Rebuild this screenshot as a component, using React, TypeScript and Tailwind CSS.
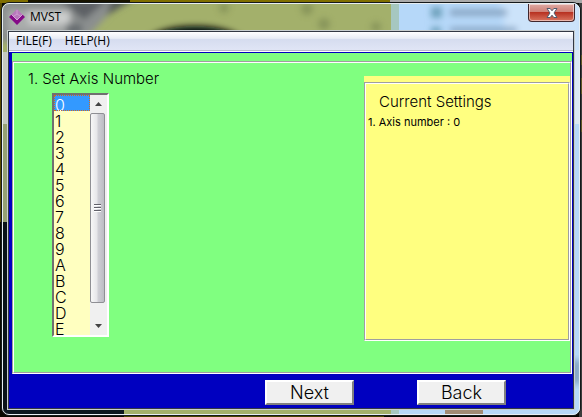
import React from "react";

const axisNumbers = ["0", "1", "2", "3", "4", "5", "6", "7", "8", "9", "A", "B", "C", "D", "E", "F"];

const Wallpaper = () => (
    <svg className="absolute inset-0 h-full w-full" viewBox="0 0 582 417" preserveAspectRatio="none" aria-hidden="true">
        <defs>
            <filter id="soft" x="-20%" y="-20%" width="140%" height="140%">
                <feGaussianBlur stdDeviation="3" />
            </filter>
            <clipPath id="glass">
                <rect x="2" y="3" width="578" height="412" rx="7" />
            </clipPath>
        </defs>
        <rect width="582" height="417" fill="#080800" />
        <path d="M0 0h390v3H0z" fill="#806f00" />
        <path d="M28 0h102v3H28z" fill="#171300" />
        <path d="M390 0h192v3H390z" fill="#aaa" />
        <path d="M0 3h2v219H0z" fill="#574a00" />
        <path d="M579 3h3v414h-3z" fill="#3c3c3c" />
        <path d="M579 55h3v10h-3zM579 78h3v16h-3zM579 120h3v12h-3z" fill="#5f5624" />
        <path d="M124 415h260v2H124z" fill="#4b4500" />
        <g clipPath="url(#glass)">
            <rect width="582" height="417" fill="#a3b06b" />
            <g filter="url(#soft)">
                <path d="M-10 -10h140l-25 28-22 24H-10z" fill="#8b8f8f" />
                <path d="M60 0h48L84 20z" fill="#5d6165" />
                <path d="M8 10l50 2 10 20H8z" fill="#a9acab" />
                <path d="M28 11h42v13H28z" fill="#cccecd" />
                <path d="M66 24h16v10H66z" fill="#666c70" />
                <ellipse cx="195" cy="44" rx="50" ry="18" fill="#05090c" />
                <path d="M112 -2h24l-30 18z" fill="#565c59" />
            </g>
            <g fill="#76834f" filter="url(#soft)" opacity=".6">
                <circle cx="224" cy="8" r="5" />
                <circle cx="307" cy="9" r="6" />
                <circle cx="324" cy="24" r="6" />
                <circle cx="376" cy="27" r="5" />
            </g>
            <path d="M396 0h186v417H396z" fill="#b6d8f9" />
            <path d="M391 0h8v417h-8z" fill="#a6c7c0" />
            <g filter="url(#soft)">
                <path d="M500 0h82v120h-60z" fill="#cce3fa" />
                <path d="M431 7h11v11h-11zM431 27h10v8h-10z" fill="#6fa3bd" />
                <path d="M450 9h57v7h-57zM450 27h67v6h-67z" fill="#8ba8c6" />
            </g>
            <path d="M2 52h6v72H2z" fill="#c4c8be" />
            <path d="M2 124h6v98H2z" fill="#96a173" />
            <path d="M2 222h6v193H2z" fill="#0a1218" />
            <path d="M2 409h122v6H2z" fill="#0b1720" />
            <path d="M573 50h7v74h-7z" fill="#dbe8f3" />
            <path d="M573 360h7v24h-7z" fill="#7895b5" filter="url(#soft)" />
            <path d="M445 409h38v5h-38z" fill="#a18b75" />
        </g>
    </svg>
);

const Logo = () => (
    <svg className="h-4 w-4" viewBox="0 0 16 16" aria-hidden="true">
        <path d="M8 0l5.500 5.500L8 11 2.500 5.500z" fill="#b878bc" />
        <path d="M8 1v4L3.500 8M8 5l4.500 3" fill="none" stroke="#d6a9d9" strokeWidth=".7" />
        <path d="M2.500 5.500L8 11l5.500-5.500L16 8l-8 8-8-8z" fill="#850b88" />
        <path d="M2.500 5.500L8 11l5.500-5.500" fill="none" stroke="#e5bbe8" strokeWidth=".8" />
    </svg>
);

const TitleBar = () => (
    <header className="flex h-[26px] items-start justify-between">
        <div className="flex items-center gap-[5px] pt-[3px] pl-0.5">
            <Logo />
            <h1 className="text-xs leading-5">MVST</h1>
        </div>
        <button
            type="button"
            aria-label="Close"
            className="flex h-[18px] w-[47px] items-center justify-center rounded-b border border-t-0 border-[#40272d] bg-[linear-gradient(#dfaaa4_0%,#cf8278_45%,#b83222_50%,#d97560_100%)] shadow-[inset_0_0_0_1px_#ffffff80]"
        >
            <svg className="h-3 w-3" viewBox="0 0 12 12" aria-hidden="true">
                <path
                    d="M1 1.5h3.2L6 3.8l1.8-2.3H11L8 6l3 4.5H7.8L6 8.2l-1.8 2.3H1L4 6z"
                    fill="#fff"
                    stroke="#525b6d"
                    strokeWidth="1"
                />
            </svg>
        </button>
    </header>
);

const MenuBar = () => (
    <nav className="flex h-[19px] items-center gap-[13px] border-b border-[#b5bacb] bg-[linear-gradient(#fff_0%,#e8ecf5_36%,#d5dcef_37%,#e0e5f5_100%)] px-[7px] text-xs">
        <button type="button">FILE(F)</button>
        <button type="button">HELP(H)</button>
    </nav>
);

const ScrollBar = () => (
    <div className="flex w-[17px] flex-col bg-[#f0f0f0]" aria-hidden="true">
        <svg className="h-[18px] w-full" viewBox="0 0 17 18">
            <path d="M5 11l3.500-4 3.500 4z" fill="#444" />
        </svg>
        <div className="mr-0.5 flex flex-1 items-center justify-center rounded-xs border border-[#8f8f94] bg-[linear-gradient(90deg,#f7f7f7_0%,#e6e6e9_45%,#cfcfd5_55%,#bcbcc4_100%)]">
            <svg className="h-2 w-2" viewBox="0 0 8 8">
                <path d="M0 .5h7M0 3.500h7M0 6.500h7" stroke="#62626a" />
                <path d="M0 1.500h7M0 4.500h7M0 7.500h7" stroke="#fff" />
            </svg>
        </div>
        <svg className="h-8 w-full" viewBox="0 0 17 32">
            <path d="M5 21l3.500 4 3.500-4z" fill="#444" />
        </svg>
    </div>
);

const AxisList = () => (
    <div className="flex w-fit border-2 border-t-[#707070] border-r-white border-b-white border-l-[#707070] bg-[#ffffc0]">
        <select
            id="axis"
            size={15}
            defaultValue="0"
            className="h-60 w-9 overflow-hidden bg-[#ffffc0] p-0 text-base outline-none [scrollbar-width:none]"
        >
            {axisNumbers.map((n) => (
                <option
                    key={n}
                    value={n}
                    className="h-4 min-h-4 p-0 pl-px leading-[14px] font-light text-black checked:bg-[linear-gradient(#3399ff,#3399ff)] checked:outline-1 checked:-outline-offset-1 checked:outline-dotted checked:outline-[#d06a20] checked:[-webkit-text-fill-color:white]"
                >
                    {n}
                </option>
            ))}
        </select>
        <ScrollBar />
    </div>
);

const CurrentSettings = () => (
    <section className="w-[206px] bg-[#ffff80] pt-1.5">
        <div className="border border-t-[#9f9f9f] border-r-white border-b-white border-l-[#9f9f9f]">
            <div className="h-[257px] border border-t-white border-r-[#9f9f9f] border-b-[#9f9f9f] border-l-white pt-2">
                <h2 className="pl-[13px] text-[15px] leading-5 font-light">Current Settings</h2>
                <p className="pl-0.5 text-[11px] leading-5">1. Axis number : 0</p>
            </div>
        </div>
    </section>
);

const WizardButton = ({ children }: { children: React.ReactNode }) => (
    <button
        type="button"
        className="h-[25px] w-[89px] border-2 border-t-white border-r-[#808080] border-b-[#808080] border-l-white bg-[#f0f0f0] text-lg leading-5 font-light"
    >
        {children}
    </button>
);

const App = () => {
    return (
        <div className="relative min-h-screen px-px pt-0.5 pb-px font-['Open_Sans',sans-serif] text-black">
            <Wallpaper />
            <div className="relative rounded-lg border border-[#15191b]">
                <div className="rounded-[7px] border border-[#e6eef2] px-1">
                    <TitleBar />
                    <div className="border border-[#c8ced0]">
                        <div className="border border-[#333944] bg-[#0000c0]">
                            <MenuBar />
                            <main className="border-t border-t-white font-['Inter',sans-serif]">
                                <div className="mt-px mr-px ml-[3px] bg-[#80ff80] pt-2">
                                    <div className="border border-t-[#9f9f9f] border-r-white border-b-white border-l-[#9f9f9f]">
                                        <div className="flex h-[311px] justify-between border border-t-white border-r-[#9f9f9f] border-b-[#9f9f9f] border-l-white">
                                            <div className="pt-1 pl-3.5">
                                                <label htmlFor="axis" className="block text-[15px] leading-6 font-light">
                                                    1. Set Axis Number
                                                </label>
                                                <div className="pt-0.5 pl-6">
                                                    <AxisList />
                                                </div>
                                            </div>
                                            <div className="pt-[13px]">
                                                <CurrentSettings />
                                            </div>
                                        </div>
                                    </div>
                                </div>
                                <footer className="flex h-[34px] items-start justify-end gap-[63px] pt-1.5 pr-[67px]">
                                    <WizardButton>Next</WizardButton>
                                    <WizardButton>Back</WizardButton>
                                </footer>
                            </main>
                        </div>
                    </div>
                    <div className="h-1" />
                </div>
            </div>
        </div>
    );
};

export default App;
